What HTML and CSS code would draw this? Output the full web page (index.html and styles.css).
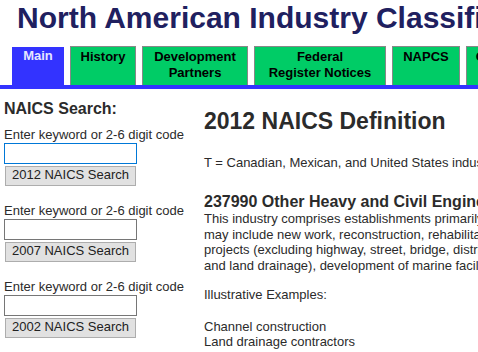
FILE: index.html
```html
<!DOCTYPE html>
<html lang="en">

<head>
  <meta charset="UTF-8" />
  <meta name="viewport" content="width=device-width, initial-scale=1.0" />
  <title>2012 NAICS Definition</title>

  <link rel="stylesheet" href="styles.css">
</head>

<body>

  <header class="masthead">
    <h1 class="site-title">North American Industry Classification System</h1>
  </header>

  <nav class="tabs">
    <a class="tab tab-main is-active" href="#">Main</a>
    <a class="tab tab-history" href="#">History</a>
    <a class="tab tab-partners" href="#">Development<br>Partners</a>
    <a class="tab tab-federal" href="#">Federal<br>Register Notices</a>
    <a class="tab tab-napcs" href="#">NAPCS</a>
    <a class="tab tab-concord" href="#">Concordances</a>
    <a class="tab tab-faq" href="#">FAQs</a>
    <a class="tab tab-files" href="#">Reference<br>Files</a>
    <a class="tab tab-contact" href="#">Contact Us</a>
  </nav>

  <div class="page">

    <aside class="search">
      <h2 class="search-title">NAICS Search:</h2>

      <form class="search-form">
        <label class="search-label" for="q2012">Enter keyword or 2-6 digit code</label>
        <input class="search-input is-focused" id="q2012" type="text" />
        <button class="search-button" type="button">2012 NAICS Search</button>
      </form>

      <form class="search-form">
        <label class="search-label" for="q2007">Enter keyword or 2-6 digit code</label>
        <input class="search-input" id="q2007" type="text" />
        <button class="search-button" type="button">2007 NAICS Search</button>
      </form>

      <form class="search-form">
        <label class="search-label" for="q2002">Enter keyword or 2-6 digit code</label>
        <input class="search-input" id="q2002" type="text" />
        <button class="search-button" type="button">2002 NAICS Search</button>
      </form>
    </aside>

    <main class="content">
      <h2 class="def-title">2012 NAICS Definition</h2>

      <p class="note">T = Canadian, Mexican, and United States industries are comparable.</p>

      <h3 class="code-title">237990 Other Heavy and Civil Engineering Construction<sup>T</sup></h3>
      <p class="def-text">
        This industry comprises establishments primarily engaged in the construction of heavy and engineering projects (excluding highway, street, bridge, and distribution lines for oil, gas, water, sewer, and power). The work performed<br>
        may include new work, reconstruction, rehabilitation, and repairs. Specialty trade contractors are included in this group if they are engaged in activities primarily related to heavy and civil engineering construction<br>
        projects (excluding highway, street, bridge, distribution line, oil and gas structure, and utilities building and structure construction). Construction projects involving water resources (e.g., dredging<br>
        and land drainage), development of marine facilities, and projects involving open space improvement (e.g., parks and trails) are included in this industry.
      </p>

      <p class="def-text">Illustrative Examples:</p>

      <p class="def-text examples">
        Channel construction<br>
        Land drainage contractors<br>
        Dam construction<br>
        Marine construction<br>
        Dock construction<br>
        Waterway construction
      </p>
    </main>

  </div>

</body>

</html>
```

FILE: styles.css
```css
:root {
  --navy: #20205f;
  --tab-green: #00cc66;
  --tab-blue: #3333ff;
  --text: #2b2b2b;
}
html {
  overflow: hidden;
}
body {
  color: var(--text);
  font: 13px/1.2 "Liberation Sans", Arial, sans-serif;
  margin: 0;
  width: 1500px;
}

/* Header */
.site-title {
  color: var(--navy);
  font-size: 30px;
  line-height: 30px;
  margin: 0;
  padding: 3px 0 0 17px;
  white-space: nowrap;
}

/* Tabs */
.tabs {
  align-items: flex-end;
  border-bottom: 4px solid var(--tab-blue);
  display: flex;
  gap: 6px;
  height: 39px;
  margin-top: 13px;
  padding-left: 12px;
}
.tab {
  background-color: var(--tab-green);
  border: 1px solid #888;
  border-bottom: 0;
  box-sizing: border-box;
  color: #000;
  flex: none;
  font-size: 13px;
  font-weight: bold;
  height: 39px;
  line-height: 16px;
  padding-top: 2px;
  text-align: center;
  text-decoration: none;
}
.tab.is-active {
  background-color: var(--tab-blue);
  border: 0;
  color: #e6e6ff;
  height: 38px;
  padding-top: 1px;
}
.tab-main { width: 52px; }
.tab-history { width: 66px; }
.tab-partners { width: 106px; }
.tab-federal { width: 132px; }
.tab-napcs { width: 68px; }
.tab-concord { width: 110px; }
.tab-faq { width: 60px; }
.tab-files { width: 90px; }
.tab-contact { width: 90px; }

/* Layout */
.page {
  display: flex;
}

/* Search column */
.search {
  box-sizing: border-box;
  flex: 0 0 204px;
  padding: 11px 0 0 4px;
}
.search-title {
  font-size: 16px;
  line-height: 18px;
  margin: 0 0 9px;
}
.search-form {
  margin-bottom: 17px;
}
.search-label {
  display: block;
  line-height: 16px;
}
.search-input {
  border: 1px solid #767676;
  box-sizing: border-box;
  display: block;
  font: 13px "Liberation Sans", Arial, sans-serif;
  height: 21px;
  margin: 0;
  outline: none;
  padding: 1px 3px;
  width: 133px;
}
.search-input.is-focused,
.search-input:focus {
  border-color: #0078d7;
}
.search-button {
  background-color: #e1e1e1;
  border: 1px solid #adadad;
  box-sizing: border-box;
  color: #222;
  display: block;
  font: 13px/16px "Liberation Sans", Arial, sans-serif;
  height: 20px;
  margin: 2px 0 0 1px;
  padding: 0 0 2px;
  width: 131px;
}

/* Definition */
.content {
  flex: none;
  width: 1280px;
}
.def-title {
  font-size: 23px;
  line-height: 26px;
  margin: 19px 0 21px;
}
.note {
  margin: 0 0 17px;
  white-space: nowrap;
}
.code-title {
  font-size: 16px;
  line-height: 19px;
  margin: 0;
  white-space: nowrap;
}
.code-title sup {
  font-size: 10px;
}
.def-text {
  margin: 0 0 14px;
  white-space: nowrap;
}
.examples {
  margin-top: 16px;
}
```
